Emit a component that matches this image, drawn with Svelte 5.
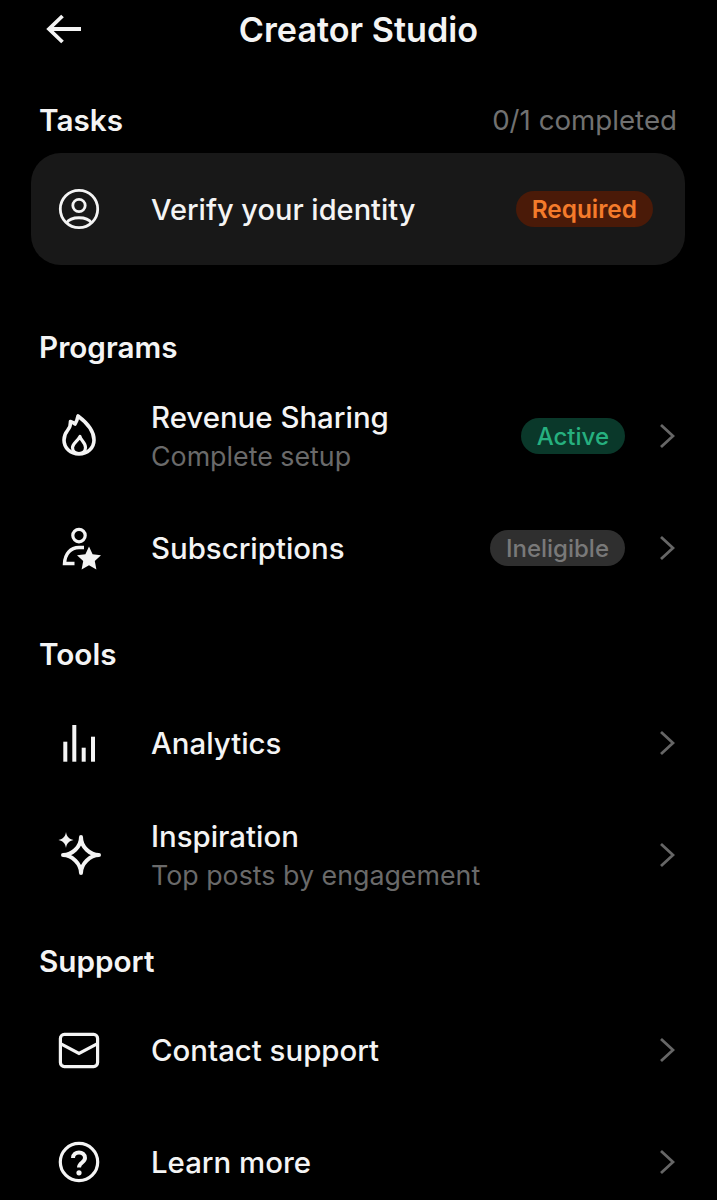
<script>
  const sections = [
    {
      title: "Programs",
      rows: [
        { icon: "flame", label: "Revenue Sharing", sub: "Complete setup", badge: "Active", tone: "active" },
        { icon: "member", label: "Subscriptions", badge: "Ineligible", tone: "muted" },
      ],
    },
    {
      title: "Tools",
      rows: [
        { icon: "bars", label: "Analytics" },
        { icon: "sparkle", label: "Inspiration", sub: "Top posts by engagement" },
      ],
    },
    {
      title: "Support",
      rows: [
        { icon: "mail", label: "Contact support" },
        { icon: "help", label: "Learn more" },
      ],
    },
  ];
</script>

{#snippet icon(name)}
  <svg class="icon" viewBox="0 0 44 44" fill="none" stroke="currentColor" stroke-width="2.8">
    {#if name === "user"}
      <circle cx="22" cy="22" r="18.7" />
      <circle cx="22" cy="18.5" r="6.2" />
      <path d="M9.5 36C14 29 30 29 34.5 36" />
    {:else if name === "flame"}
      <path stroke-width="3.6" stroke-linejoin="round" d="M21 2C20.5 5 19.5 7.5 18 10C17 9 15.5 8 13.5 7.5C13.8 11 12.5 14 10.5 16.5C8 19.5 7 22.5 7 26C7 34 13.5 40 22 40C30.5 40 37 34 37 26C37 16 29 8 21 2Z" />
      <path stroke-width="3.2" stroke-linejoin="round" d="M23 22.5C23.5 26 28.5 28.5 28.5 33.5C28.5 37.5 25.5 39.5 22 39.5C18.5 39.5 15.5 37.5 15.5 33.5C15.5 29 20.5 27.5 23 22.5Z" />
    {:else if name === "member"}
      <circle cx="22" cy="9.6" r="6.2" stroke-width="3.2" />
      <path stroke-width="3.4" d="M27 21.5H22C13.5 21.5 8 28 7.5 37.5H17.5" />
      <path fill="currentColor" stroke="none" d="M32 20.5L35.6 28.3L44 29.2L37.8 35L39.4 43.4L32 39.3L24.6 43.4L26.2 35L20 29.2L28.4 28.3Z" />
    {:else if name === "bars"}
      <g fill="currentColor" stroke="none">
        <rect x="6.3" y="20.7" width="4" height="20" />
        <rect x="15.3" y="4" width="4" height="36.7" />
        <rect x="24.7" y="26.7" width="4" height="14" />
        <rect x="34" y="15.7" width="4" height="25" />
      </g>
    {:else if name === "sparkle"}
      <path stroke-width="4" stroke-linejoin="round" d="M24 4C24 14 33 22 42 22C33 22 24 31 24 40C24 31 15 22 6 22C15 22 24 14 24 4Z" />
      <path fill="currentColor" stroke="none" d="M9 -1C9.6 3.5 12 6 16.5 7C12 8 9.6 10.5 9 15C8.4 10.5 6 8 1.5 7C6 6 8.4 3.5 9 -1Z" />
    {:else if name === "mail"}
      <rect x="3.4" y="6.4" width="37.2" height="32.2" rx="4" stroke-width="3.2" />
      <path stroke-width="3.2" d="M3 15.3L22 25.5L41 15.3" />
    {:else if name === "help"}
      <circle cx="22" cy="22" r="18.7" stroke-width="3.2" />
      <path stroke-width="4" d="M16 18C16 10.5 28 10.5 28 18C28 22.5 22 22.5 22 27.5" />
      <circle cx="22" cy="32.8" r="2.6" fill="currentColor" stroke="none" />
    {/if}
  </svg>
{/snippet}

<main>
  <header>
    <svg class="back" viewBox="0 0 36 30" fill="none" stroke="currentColor" stroke-width="3.8">
      <path d="M35 15H3M16.5 2L3 15L16.5 28" />
    </svg>
    <h1>Creator Studio</h1>
  </header>

  <section class="tasks">
    <div class="heading">
      <h2>Tasks</h2>
      <span class="count">0/1 completed</span>
    </div>
    <div class="card">
      {@render icon("user")}
      <span class="label">Verify your identity</span>
      <span class="badge required">Required</span>
    </div>
  </section>

  {#each sections as section}
    <section>
      <div class="heading"><h2>{section.title}</h2></div>
      {#each section.rows as row}
        <div class="row">
          {@render icon(row.icon)}
          <div class="text" class:stacked={row.sub}>
            <span class="label">{row.label}</span>
            {#if row.sub}<span class="sub">{row.sub}</span>{/if}
          </div>
          {#if row.badge}<span class="badge {row.tone}">{row.badge}</span>{/if}
          <svg class="chevron" viewBox="0 0 16 26" fill="none" stroke="currentColor" stroke-width="2.8">
            <path d="M2 2L14 13L2 24" />
          </svg>
        </div>
      {/each}
    </section>
  {/each}
</main>

<style>
  :global(body) {
    background: #000;
    overflow: hidden;
  }

  main {
    height: 1200px;
    overflow: hidden;
    color: #f4f4f4;
    font-family: Inter, "Noto Sans", sans-serif;
  }

  header {
    position: relative;
    height: 60px;
    display: flex;
    align-items: center;
    justify-content: center;
  }

  .back {
    position: absolute;
    left: 46px;
    top: 14px;
    width: 36px;
    height: 30px;
  }

  h1 {
    margin: 0 0 2px;
    font-size: 34.2px;
    font-weight: 600;
  }

  section {
    padding-top: 30px;
  }

  .tasks {
    padding-top: 40px;
    padding-bottom: 32px;
  }

  .heading {
    display: flex;
    justify-content: space-between;
    align-items: center;
    height: 40px;
    margin-bottom: 13px;
    padding: 0 40px 0 39px;
  }

  h2 {
    margin: 0;
    font-size: 29.7px;
    font-weight: 600;
  }

  .count {
    font-size: 27.7px;
    color: #717171;
  }

  .card {
    display: flex;
    align-items: center;
    height: 112px;
    margin: 0 32px 0 31px;
    padding: 0 32px 0 26px;
    background: #181818;
    border-radius: 30px;
  }

  .row {
    display: flex;
    align-items: center;
    height: 112px;
    padding: 0 42px 0 57px;
  }

  .icon {
    flex: none;
    width: 44px;
    height: 44px;
    margin-right: 50px;
    overflow: visible;
  }

  .text {
    flex: 1;
    display: flex;
    flex-direction: column;
    gap: 4px;
  }

  .stacked {
    margin-top: 2px;
  }

  .label {
    font-size: 29.4px;
    font-weight: 500;
    line-height: 35px;
  }

  .card .label {
    flex: 1;
    font-size: 29px;
  }

  .sub {
    font-size: 26.8px;
    line-height: 35px;
    color: #6a6a6a;
  }

  .badge {
    height: 36px;
    padding: 0 16px;
    display: flex;
    align-items: center;
    border-radius: 18px;
    font-size: 24px;
    font-weight: 500;
  }

  .required {
    background: #4a1a08;
    color: #f47b2b;
    font-size: 24.4px;
    font-weight: 600;
  }

  .active {
    background: #0a382a;
    color: #26b07f;
  }

  .muted {
    background: #2f2f2f;
    color: #797979;
  }

  .chevron {
    flex: none;
    width: 16px;
    height: 26px;
    margin-left: 34px;
    color: #666;
  }
</style>
